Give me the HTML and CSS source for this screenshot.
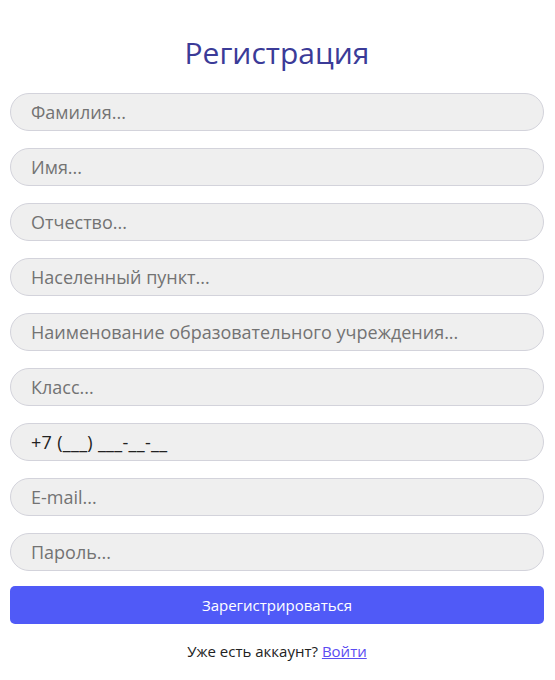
FILE: index.html
```html
<!DOCTYPE html>
<html lang="ru">
<head>
<meta charset="utf-8">
<link rel="stylesheet" href="styles.css">
</head>
<body>
<form class="form">
  <h1 class="title">Регистрация</h1>
  <div class="fields">
    <input class="field" placeholder="Фамилия...">
    <input class="field" placeholder="Имя...">
    <input class="field" placeholder="Отчество...">
    <input class="field" placeholder="Населенный пункт...">
    <input class="field" placeholder="Наименование образовательного учреждения...">
    <input class="field" placeholder="Класс...">
    <input class="field field-phone" value="+7 (___) ___-__-__">
    <input class="field" placeholder="E-mail...">
    <input class="field" placeholder="Пароль...">
  </div>
  <button type="button" class="submit">Зарегистрироваться</button>
  <p class="login">Уже есть аккаунт? <a href="#" class="login-link">Войти</a></p>
</form>
</body>
</html>
```
FILE: styles.css
```css
* { box-sizing: border-box; }
html, body { margin: 0; padding: 0; background: #fff; }
body { font-family: "Open Sans", "Noto Sans", sans-serif; }
.form {
  display: flex;
  flex-direction: column;
  padding: 0 11px 0 10px;
}
.title {
  margin: 33px 0 0;
  height: 60px;
  text-align: center;
  font-weight: 400;
  font-size: 30px;
  line-height: 40px;
  color: #3b3b98;
}
.fields {
  display: flex;
  flex-direction: column;
  gap: 17px;
}
.field {
  height: 38px;
  width: 100%;
  border: 1px solid #d3d3db;
  border-radius: 19px;
  background: #efefef;
  padding: 0 20px;
  font-family: inherit;
  font-size: 18px;
  color: #222;
  outline: none;
}
.field-phone { letter-spacing: 0.3px; }
.field::placeholder { color: #737373; }
.submit {
  margin-top: 15px;
  height: 38px;
  border: none;
  border-radius: 5px;
  background: #505af7;
  color: #fff;
  font-family: inherit;
  font-size: 15px;
}
.login {
  margin: 17px 0 0;
  text-align: center;
  font-size: 15px;
  color: #222;
}
.login-link { color: #5b4cf2; }
```
